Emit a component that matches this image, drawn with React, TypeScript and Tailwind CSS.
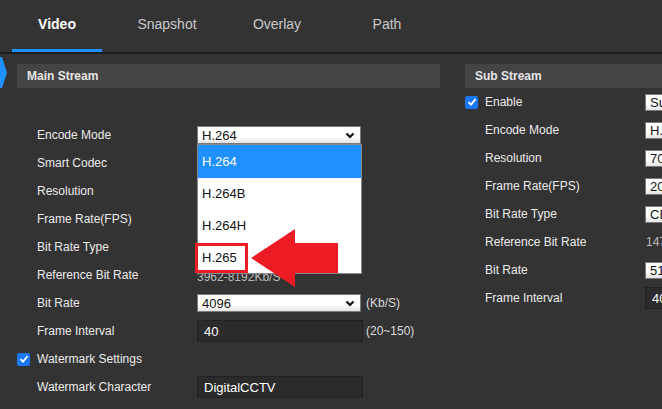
import React from "react";

const tabs = ["Video", "Snapshot", "Overlay", "Path"];

const Chevron = () => (
  <svg width="10" height="7" viewBox="0 0 10 7" className="shrink-0">
    <path d="M1.5 1.5 L5 5 L8.5 1.5" fill="none" stroke="#111" strokeWidth="2.2" />
  </svg>
);

const Select: React.FC<{ value: string; w?: string; h?: string }> = ({ value, w = "w-[164px]", h = "h-[18px]" }) => (
  <div
    className={`${w} ${h} flex items-center justify-between pl-[4px] pr-[5px] border border-[#7a7a7a] bg-linear-to-b from-white from-60% to-[#e4e4e4] text-[13px] text-[#111] leading-none`}
  >
    <span>{value}</span>
    <Chevron />
  </div>
);

const DarkInput: React.FC<{ value: string; w?: string }> = ({ value, w = "w-[166px]" }) => (
  <div className={`${w} h-[22px] flex items-center pl-[6px] bg-[#2b2b2b] border border-[#222] text-[13px] text-white leading-none`}>
    {value}
  </div>
);

const Check = () => (
  <div className="w-[13px] h-[13px] rounded-[2px] bg-[#1a78f5] flex items-center justify-center shrink-0">
    <svg width="10" height="10" viewBox="0 0 10 10">
      <path d="M1.5 5.2 L4 7.6 L8.6 2.2" fill="none" stroke="#fff" strokeWidth="1.8" />
    </svg>
  </div>
);

const Row: React.FC<{ label: string; children?: React.ReactNode; checkbox?: boolean }> = ({ label, children, checkbox }) => (
  <div className="h-[28px] flex items-center">
    <div className="w-[180px] flex items-center shrink-0">
      {checkbox ? (
        <>
          <Check />
          <span className="ml-[7px]">{label}</span>
        </>
      ) : (
        <span className="pl-[20px]">{label}</span>
      )}
    </div>
    {children}
  </div>
);

const Header: React.FC<{ title: string; w: string }> = ({ title, w }) => (
  <div className={`${w} h-[24px] bg-[#444] flex items-center pl-[10px] text-[12px] font-bold text-[#e6e6e6]`}>{title}</div>
);

export default function App() {
  return (
    <div className="w-[662px] h-[409px] overflow-hidden bg-[#333] relative font-['Liberation_Sans',Arial,sans-serif] text-[12px] text-[#ebebeb]">
      {/* tabs */}
      <div className="h-[54px] flex pl-[2px] border-b-2 border-[#1d1d1d]">
        {tabs.map((t, i) => (
          <div key={t} className="w-[110px] relative flex items-center justify-center pb-[4px]">
            <span className={i === 0 ? "text-[14px] font-bold text-white" : "text-[14px] text-[#c8c8c8]"}>{t}</span>
            {i === 0 && <div className="absolute left-[10px] right-[10px] bottom-0 h-[3px] bg-[#1e90ff]" />}
          </div>
        ))}
      </div>

      <svg className="absolute left-0 top-[57px]" width="8" height="31" viewBox="0 0 8 31">
        <polygon points="0,0 2,0 7,15.5 2,31 0,31" fill="#1e90ff" />
      </svg>

      <div className="flex pl-[17px] pt-[10px]">
        {/* main stream */}
        <div className="w-[423px] shrink-0">
          <Header title="Main Stream" w="w-[423px]" />
          <div className="mt-[33px]">
            <Row label="Encode Mode">
              <div className="relative">
                <Select value="H.264" />
                <div className="absolute left-0 top-[18px] w-[165px] h-[130px] bg-white border border-[#8a8a8a] text-[13px] text-[#111] z-10">
                  <div className="h-[33px] bg-[#1e90ff] text-white flex items-center pl-[4px]">H.264</div>
                  <div className="h-[32px] flex items-center pl-[4px]">H.264B</div>
                  <div className="h-[32px] flex items-center pl-[4px]">H.264H</div>
                  <div className="h-[32px] flex items-center pl-[4px]">H.265</div>
                  <div className="absolute left-[-3px] top-[98px] w-[53px] h-[30px] border-[3px] border-[#ed1c24]" />
                  <svg className="absolute left-[53px] top-[84px]" width="88" height="58" viewBox="0 0 88 58">
                    <polygon points="0,29 44,0 44,14 87,14 87,44 44,44 44,58" fill="#ed1c24" />
                  </svg>
                </div>
              </div>
            </Row>
            <Row label="Smart Codec" />
            <Row label="Resolution" />
            <Row label="Frame Rate(FPS)" />
            <Row label="Bit Rate Type" />
            <Row label="Reference Bit Rate">
              <span className="text-[#bdbdbd] pt-[4px]">3962-8192Kb/S</span>
            </Row>
            <Row label="Bit Rate">
              <Select value="4096" />
              <span className="ml-[5px] text-[#dcdcdc]">(Kb/S)</span>
            </Row>
            <Row label="Frame Interval">
              <DarkInput value="40" />
              <span className="ml-[3px] text-[#dcdcdc]">(20~150)</span>
            </Row>
            <Row label="Watermark Settings" checkbox />
            <Row label="Watermark Character">
              <DarkInput value="DigitalCCTV" />
            </Row>
          </div>
        </div>

        {/* sub stream */}
        <div className="ml-[25px] shrink-0">
          <Header title="Sub Stream" w="w-[300px]" />
          <Row label="Enable" checkbox>
            <Select value="Sub Stream 1" h="h-[17px]" />
          </Row>
          <Row label="Encode Mode">
            <Select value="H.264" h="h-[17px]" />
          </Row>
          <Row label="Resolution">
            <Select value="704*576(D1)" h="h-[17px]" />
          </Row>
          <Row label="Frame Rate(FPS)">
            <Select value="20" h="h-[17px]" />
          </Row>
          <Row label="Bit Rate Type">
            <Select value="CBR" h="h-[17px]" />
          </Row>
          <Row label="Reference Bit Rate">
            <span className="text-[#bdbdbd] pl-[1px]">1472-2560Kb/S</span>
          </Row>
          <Row label="Bit Rate">
            <Select value="512" h="h-[17px]" />
          </Row>
          <Row label="Frame Interval">
            <DarkInput value="40" />
          </Row>
        </div>
      </div>
    </div>
  );
}
